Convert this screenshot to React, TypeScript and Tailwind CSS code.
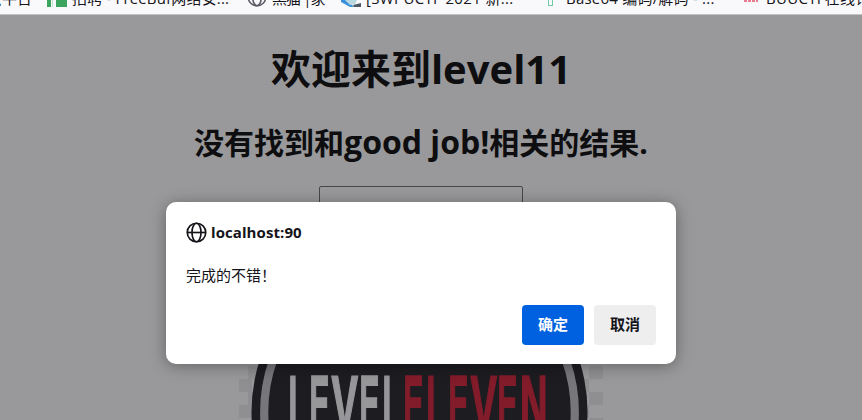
import React from "react";

const ui = "font-['Open_Sans','Noto_Sans_CJK_SC',sans-serif]";

function Globe({ className }: { className: string }) {
  return (
    <svg viewBox="0 0 20 20" className={className} fill="none" stroke="currentColor" strokeWidth="1.6">
      <circle cx="10" cy="10" r="8.8" />
      <ellipse cx="10" cy="10" rx="4.3" ry="8.8" />
      <path d="M1.2 10h17.6" />
    </svg>
  );
}

function Bookmark({ label, className }: { label: string; className: string }) {
  return <span className={`absolute -top-[13px] whitespace-nowrap text-[15px] leading-[22px] ${className}`}>{label}</span>;
}

function BookmarksBar() {
  return (
    <div className={`relative h-[15px] shrink-0 overflow-hidden border-b border-[#c4c4c6] bg-[#f9f9fb] text-[#15141a] ${ui}`}>
      <Bookmark label="云平台" className="-left-[13px]" />
      <svg className="absolute left-[47px] top-0 h-[7px] w-5" viewBox="0 0 20 7">
        <path fill="#3ba55d" d="M0 0h4v7H0zM9 0h11v7H9z" />
        <path fill="#bfe3cb" d="M5 0h1v7H5z" />
      </svg>
      <Bookmark label="招聘 - FreeBuf网络安..." className="left-[72px] tracking-[0.17px]" />
      <Globe className="absolute -top-[13px] left-[247px] h-5 w-5 text-[#5b5b66]" />
      <Bookmark label="黑猫 |家" className="left-[272px] tracking-[-0.9px]" />
      <svg className="absolute left-[341px] top-0 h-[7px] w-5" viewBox="0 0 20 7">
        <path fill="#3b92dc" d="M0 0h6l7 7H9L0 2z" />
        <path fill="#b9d8df" d="M4 0h12l-2 4-5 1z" />
        <path fill="#4d5961" d="M12 5l8-2v4h-7z" />
      </svg>
      <Bookmark label="[SWPUCTF 2021 新..." className="left-[366px] tracking-[0.35px]" />
      <span className="absolute -top-2 left-[548px] h-[14px] w-[5px] border border-[#74cca4]" />
      <Bookmark label="Base64 编码/解码 - ..." className="left-[566px] tracking-[0.22px]" />
      <svg className="absolute left-[744px] top-0 h-[2px] w-[14px]" viewBox="0 0 14 2">
        <path stroke="#e0526b" strokeWidth="1.5" strokeDasharray="3 1" d="M0 1h14" />
      </svg>
      <Bookmark label="BUUCTF在线评测" className="left-[766px] tracking-[0.3px]" />
    </div>
  );
}

const squares = [[239, 379, 13], [239, 405, 13], [248, 366, 13], [248, 392, 13], [589, 366, 14], [589, 392, 14], [576, 379, 13], [576, 405, 13], [589, 418, 14]];

const letters: [string, number, number][] = [
  ["L", 290, 17], ["E", 311, 18], ["V", 331, 27], ["E", 361, 18], ["L", 384, 17],
  ["E", 405, 18], ["L", 428, 17], ["E", 450, 18], ["V", 470, 27], ["E", 499, 18], ["N", 522, 24],
];
const glyphBox: Record<string, [number, number]> = { L: [4, 42], E: [4, 47], V: [-1, 53], N: [4, 49] };

function LevelBadge() {
  return (
    <svg className="h-[60px] w-[366px] shrink-0" viewBox="238 360 366 60">
      {squares.map(([x, y, w]) => <rect key={`${x}-${y}`} x={x} y={y} width={w} height="13" fill="#8f8f91" />)}
      <circle cx="419.5" cy="412" r="168" fill="#1d1c20" />
      <circle cx="419.5" cy="412" r="155.3" fill="none" stroke="#76767b" strokeWidth="8.2" />
      <g fontFamily="Liberation Sans, sans-serif" fontWeight="700" fontSize="78">
        {letters.map(([char, x, width], i) => {
          const [offset, glyphWidth] = glyphBox[char];
          const scale = width / glyphWidth;
          const color = i < 5 ? "#97979a" : "#831c2a";
          return (
            <text key={x} transform={`translate(${x - offset * scale} 430) scale(${scale} 1)`} fill={color} stroke={color} strokeWidth="2">
              {char}
            </text>
          );
        })}
      </g>
    </svg>
  );
}

function Dialog() {
  return (
    <div role="dialog" className={`absolute left-[166px] top-[202px] flex h-[162px] w-[510px] flex-col rounded-[10px] bg-white px-5 pt-[19px] text-[15px] text-[#15141a] shadow-[0_2px_16px_rgba(0,0,0,0.35)] ${ui}`}>
      <div className="flex h-[22px] items-center gap-1 font-bold leading-[22px]">
        <Globe className="h-[21px] w-[21px]" />
        <span className="tracking-[0.08px]">localhost:90</span>
      </div>
      <p className="mt-[21px] leading-[22px]">完成的不错！</p>
      <div className="mt-[19px] flex justify-end gap-[10px] font-bold">
        <button className="h-10 w-[62px] rounded bg-[#0061e0] pb-0.5 text-[#fbfbfe]">确定</button>
        <button className="h-10 w-[62px] rounded bg-[#eeeeef] pb-0.5">取消</button>
      </div>
    </div>
  );
}

export default function App() {
  return (
    <div className="relative flex h-[420px] w-[862px] flex-col overflow-hidden bg-[#99999b]">
      <BookmarksBar />
      <main className={`flex flex-1 flex-col items-center overflow-hidden pr-5 text-[#0e0e10] ${ui}`}>
        <h1 className="mt-[26px] whitespace-nowrap text-[40px] font-bold leading-[56px]">欢迎来到level11</h1>
        <h2 className="mt-[23px] h-[44px] whitespace-nowrap text-[30px] font-bold leading-[44px]">没有找到和<span className="text-[32px]">good job!</span>相关的结果.</h2>
        <div className="mb-[152px] mt-[22px] h-[22px] w-[204px] shrink-0 rounded-[2px] border border-[#46464c]" />
        <LevelBadge />
      </main>
      <Dialog />
    </div>
  );
}
